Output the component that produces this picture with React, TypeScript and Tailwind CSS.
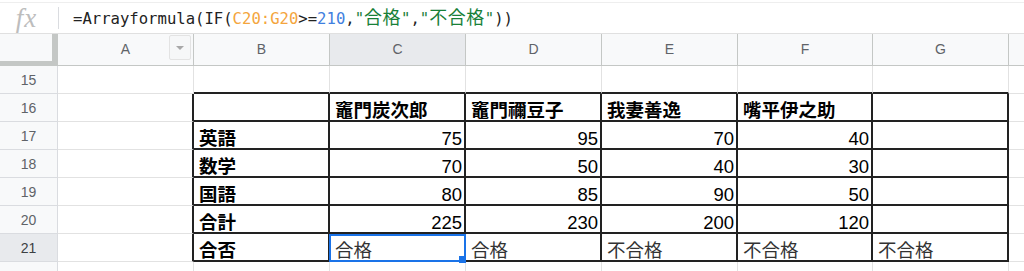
import React from 'react';

const letters = ['A', 'B', 'C', 'D', 'E', 'F', 'G'];
const widths = ['w-[136px]', 'w-[136px]', 'w-[136px]', 'w-[136px]', 'w-[136px]', 'w-[135px]', 'w-[136px]'];

// rows 16..21, columns B..G
const table: { [key: number]: string[] } = {
  16: ['', '竈門炭次郎', '竈門禰豆子', '我妻善逸', '嘴平伊之助', ''],
  17: ['英語', '75', '95', '70', '40', ''],
  18: ['数学', '70', '50', '40', '30', ''],
  19: ['国語', '80', '85', '90', '50', ''],
  20: ['合計', '225', '230', '200', '120', ''],
  21: ['合否', '合格', '合格', '不合格', '不合格', '不合格'],
};

const rows = [15, 16, 17, 18, 19, 20, 21, 22];

const FormulaBar = () => (
  <div className="h-[34px] pt-[2px] border-b border-[#e0e0e0] bg-white">
    <div className="h-full border-t border-[#eeeeee] flex items-center">
      <div className="w-[53px] flex justify-center">
        <span className="font-['Liberation_Serif',serif] italic text-[27px] leading-none text-[#bdbdbd] tracking-[1px]">
          fx
        </span>
      </div>
      <div className="ml-[5px] w-px h-[22px] bg-[#dadce0]" />
      <div className="pl-[14px] font-['DejaVu_Sans_Mono','Noto_Sans_CJK_JP',monospace] text-[15.6px] text-[#222] whitespace-pre">
        <span>=Arrayformula(IF(</span>
        <span className="text-[#f4a53d]">C20:G20</span>
        <span>&gt;=</span>
        <span className="text-[#3f7fe0]">210</span>
        <span>,</span>
        <span className="text-[#188038]">
          "<span className="text-[18px] tracking-[0.5px]">合格</span>"
        </span>
        <span>,</span>
        <span className="text-[#188038]">
          "<span className="text-[18px] tracking-[0.5px]">不合格</span>"
        </span>
        <span>))</span>
      </div>
    </div>
  </div>
);

const HeaderRow = () => (
  <div className="flex h-[32px] bg-[#f8f9fa] font-['Liberation_Sans',sans-serif] text-[14px] text-[#5f6368]">
    <div className="w-[58px] shrink-0 border-r-[6px] border-b-[5px] border-[#c4c7c5]" />
    {letters.map((l, i) => (
      <div
        key={l}
        className={`${widths[i]} shrink-0 relative flex items-center justify-center border-r border-b border-[#c4c7c5] ${
          l === 'C' ? 'bg-[#e8eaed]' : ''
        }`}
      >
        {l}
        {l === 'A' && (
          <div className="absolute right-[2px] top-[1px] w-[22px] h-[25px] rounded-[2px] border border-[#e3e3e3] bg-[#f6f7f8] flex items-center justify-center">
            <div className="w-0 h-0 border-l-[4px] border-r-[4px] border-t-[4px] border-l-transparent border-r-transparent border-t-[#a8a8a8]" />
          </div>
        )}
      </div>
    ))}
    <div className="flex-1 border-b border-[#c4c7c5]" />
  </div>
);

const BodyRow = ({ row }: { row: number }) => {
  const inTable = row >= 16 && row <= 21;
  const data = table[row];
  return (
    <div className="flex h-[28px] font-['Liberation_Sans','Noto_Sans_CJK_JP',sans-serif] text-[18.5px] leading-[19px]">
      <div
        className={`w-[58px] shrink-0 flex items-center justify-center border-r border-b border-[#dadce0] text-[14px] leading-none ${
          row === 21 ? 'bg-[#e8eaed] text-[#3c4043]' : 'bg-[#f8f9fa] text-[#5f6368]'
        }`}
      >
        {row}
      </div>
      {letters.map((l, i) => {
        const tableCol = i >= 1;
        const bottomBlack = tableCol && row >= 15 && row <= 21;
        const rightBlack = inTable;
        const text = inTable && tableCol ? data[i - 1] : '';
        const isNum = /^\d+$/.test(text);
        const bold = inTable && (i === 1 || row === 16);
        const selected = row === 21 && l === 'C';
        return (
          <div
            key={l}
            className={`${widths[i]} shrink-0 relative flex items-end whitespace-nowrap ${
              bottomBlack ? 'border-b-2 border-b-[#222]' : 'border-b border-b-[#e2e2e2]'
            } ${rightBlack ? 'border-r-2 border-r-[#222]' : 'border-r border-r-[#e2e2e2]'} ${
              isNum ? 'justify-end pr-[2px]' : 'justify-start pl-[5px]'
            } ${bold ? 'font-bold text-black' : row === 21 ? 'text-[#333]' : 'text-black'}`}
          >
            {text}
            {selected && (
              <div className="absolute top-0 -left-[1px] -right-[2px] -bottom-[2px] border-2 border-[#1a73e8] z-10">
                <div className="absolute -right-[2px] -bottom-[3px] w-[7px] h-[7px] bg-[#1a73e8]" />
              </div>
            )}
          </div>
        );
      })}
      <div className="flex-1 border-b border-[#e2e2e2]" />
    </div>
  );
};

export default function App() {
  return (
    <div className="w-[1024px] h-[271px] overflow-hidden bg-white">
      <FormulaBar />
      <HeaderRow />
      {rows.map((r) => (
        <BodyRow key={r} row={r} />
      ))}
    </div>
  );
}
